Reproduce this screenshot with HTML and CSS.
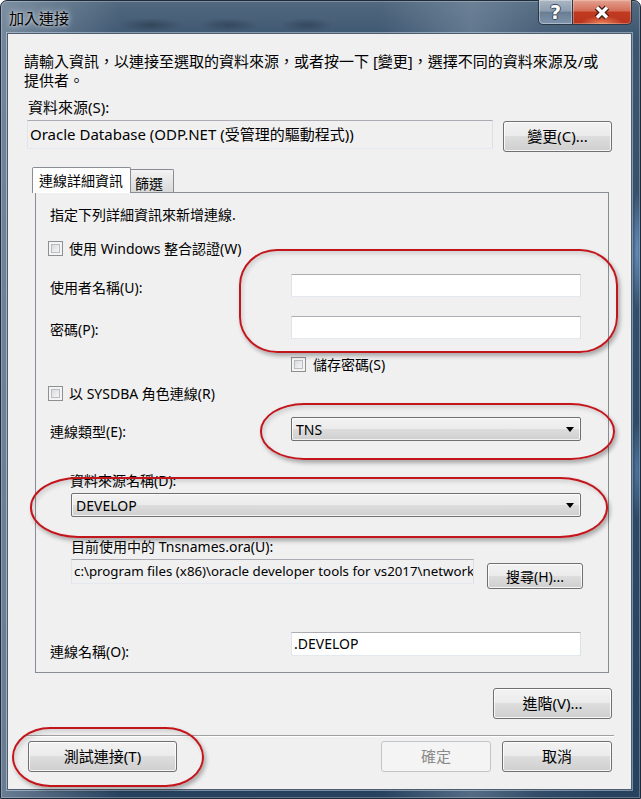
FILE: index.html
```html
<!DOCTYPE html>
<html lang="zh-Hant">
<head>
<meta charset="utf-8">
<title>加入連接</title>
<link rel="stylesheet" href="styles.css">
</head>
<body>
<div class="window">
  <div class="titlebar">
    <span class="title">加入連接</span>
    <div class="caption">
      <span class="cap help">?</span>
      <span class="cap close"><svg width="22" height="15" viewBox="0 0 22 15"><path d="M6 2.5 L16 12.5 M16 2.5 L6 12.5" stroke="#3a1710" stroke-width="6" fill="none"/><path d="M6 2.5 L16 12.5 M16 2.5 L6 12.5" stroke="#fff" stroke-width="3.4" fill="none"/></svg></span>
    </div>
  </div>
  <div class="client">
    <p class="intro">請輸入資訊，以連接至選取的資料來源，或者按一下 [變更]，選擇不同的資料來源及/或<br>提供者。</p>
    <div class="src-label">資料來源(S):</div>
    <div class="src-row">
      <div class="ro src-box">Oracle Database (ODP.NET (受管理的驅動程式))</div>
      <button class="btn change">變更(C)...</button>
    </div>
    <div class="tabs">
      <div class="tab active">連線詳細資訊</div>
      <div class="tab second">篩選</div>
    </div>
    <div class="panel">
      <div class="hint">指定下列詳細資訊來新增連線.</div>
      <div class="cb-row first"><span class="cb"></span><span>使用 Windows 整合認證(W)</span></div>
      <div class="field-row user"><span class="flabel">使用者名稱(U):</span><span class="tb"></span></div>
      <div class="field-row pwd"><span class="flabel">密碼(P):</span><span class="tb"></span></div>
      <div class="cb-row save"><span class="cb"></span><span>儲存密碼(S)</span></div>
      <div class="cb-row sysdba"><span class="cb"></span><span>以 SYSDBA 角色連線(R)</span></div>
      <div class="field-row ctype"><span class="flabel">連線類型(E):</span><span class="combo">TNS<i class="arrow"></i></span></div>
      <div class="dsn-label">資料來源名稱(D):</div>
      <div class="combo dsn">DEVELOP<i class="arrow"></i></div>
      <div class="tns-label">目前使用中的 Tnsnames.ora(U):</div>
      <div class="path-row">
        <div class="ro path">c:\program files (x86)\oracle developer tools for vs2017\network\</div>
        <button class="btn search">搜尋(H)...</button>
      </div>
      <div class="field-row cname"><span class="flabel">連線名稱(O):</span><span class="tb">.DEVELOP</span></div>
    </div>
    <div class="adv-row"><button class="btn adv">進階(V)...</button></div>
    <div class="sep"></div>
    <div class="bottom-row">
      <button class="btn test">測試連接(T)</button>
      <button class="btn ok" disabled>確定</button>
      <button class="btn cancel">取消</button>
    </div>
  </div>
</div>
<div class="mark m1"></div>
<div class="mark m2"></div>
<div class="mark m3"></div>
<div class="mark m4"></div>
</body>
</html>
```

FILE: styles.css
```css
* { box-sizing: border-box; }
html, body { margin: 0; padding: 0; }
body {
  position: relative;
  width: 641px;
  height: 799px;
  overflow: hidden;
  background: #ffffff;
  font-family: "Noto Sans", "Noto Sans CJK TC", sans-serif;
  font-size: 14px;
  color: #000;
}
.window {
  width: 641px;
  height: 799px;
  display: flex;
  flex-direction: column;
  padding: 0 8px 8px 6px;
  border: 1px solid #1d2b3a;
  border-radius: 7px 7px 0 0;
  background:
    radial-gradient(ellipse 32px 7px at 150px 24px, rgba(30, 42, 58, .45), rgba(30, 42, 58, 0)),
    radial-gradient(ellipse 30px 7px at 228px 24px, rgba(30, 42, 58, .4), rgba(30, 42, 58, 0)),
    radial-gradient(ellipse 26px 7px at 306px 24px, rgba(30, 42, 58, .4), rgba(30, 42, 58, 0)),
    radial-gradient(ellipse 5px 60px at 636px 250px, rgba(120, 170, 225, .7), rgba(120, 170, 225, 0)),
    radial-gradient(ellipse 5px 50px at 636px 470px, rgba(110, 160, 215, .5), rgba(110, 160, 215, 0)),
    linear-gradient(90deg, rgba(160, 174, 190, .55) 0, rgba(160, 174, 190, 0) 120px, rgba(0, 0, 0, 0) 380px, rgba(140, 158, 178, .45) 470px, rgba(140, 158, 178, .1) 540px, rgba(0, 0, 0, 0) 600px),
    linear-gradient(180deg, #52697f 0, #3c5570 40px, #304b68 400px, #27425f 799px);
  box-shadow: inset 0 0 0 1px rgba(255, 255, 255, .25);
}
.titlebar {
  height: 32px;
  flex: none;
  display: flex;
  justify-content: space-between;
  align-items: flex-start;
}
.title {
  margin: 8px 0 0 2px;
  font-size: 15px;
  line-height: 19px;
  text-shadow: 0 0 7px rgba(255, 255, 255, .85), 0 0 3px rgba(255, 255, 255, .6);
}
.caption { display: flex; margin-top: -1px; }
.cap {
  display: flex;
  align-items: center;
  justify-content: center;
  height: 25px;
  border: 1px solid #2a3848;
  border-top: none;
}
.help {
  width: 35px;
  border-radius: 0 0 0 5px;
  background: linear-gradient(#aab6c3 0, #8d9db0 45%, #6a7d93 52%, #7f95ad 100%);
  color: #fff;
  font: bold 19px "DejaVu Sans", sans-serif;
  text-shadow: -1px 0 #39475a, 1px 0 #39475a, 0 -1px #39475a, 0 1px #39475a;
  box-shadow: inset 0 0 0 1px rgba(255, 255, 255, .35);
}
.close {
  width: 59px;
  border-left: none;
  border-radius: 0 0 5px 0;
  background:
    radial-gradient(ellipse 22px 8px at 50% 100%, rgba(255, 170, 120, .7), rgba(255, 170, 120, 0)),
    linear-gradient(#e4a292 0, #d46f59 44%, #c13a20 52%, #b9341e 100%);
  box-shadow: inset 0 0 0 1px rgba(255, 220, 200, .35);
}
.client {
  flex: 1;
  background: #f0f0f0;
  border: 1px solid #4c5d71;
  box-shadow: 0 0 0 1px rgba(225, 234, 244, .45);
}
.intro {
  margin: 18px 0 0 16px;
  font-size: 15px;
  line-height: 19px;
  white-space: nowrap;
}
.src-label {
  margin: 8px 0 0 20px;
  font-size: 15px;
  line-height: 19px;
}
.src-row {
  display: flex;
  align-items: flex-start;
  height: 32px;
  margin: 3px 0 0 19px;
}
.ro, .tb {
  border: 1px solid;
  border-color: #abadb3 #dbdfe6 #e3e9ef #e2e3ea;
  overflow: hidden;
  white-space: nowrap;
}
.ro { background: #f0f0f0; }
.tb { background: #fff; }
.src-box {
  width: 466px;
  height: 29px;
  padding-left: 2px;
  font-size: 15px;
  line-height: 27px;
}
.btn {
  font-family: inherit;
  font-size: 15px;
  color: #000;
  border: 1px solid #707070;
  border-radius: 3px;
  background: linear-gradient(#f2f2f2 0, #ebebeb 49%, #dddddd 50%, #cfcfcf 100%);
  box-shadow: inset 0 0 0 1px rgba(255, 255, 255, .8);
  padding: 0;
  line-height: 19px;
  display: flex;
  align-items: center;
  justify-content: center;
}
.btn:disabled {
  border-color: #c2c5c8;
  background: #f4f4f4;
  color: #8a8a8a;
  box-shadow: none;
}
.change { margin: 1px 0 0 10px; width: 109px; height: 31px; }
.tabs {
  display: flex;
  align-items: flex-end;
  height: 25px;
  margin: 15px 0 0 24px;
  position: relative;
  z-index: 1;
}
.tab {
  border: 1px solid #898c95;
  border-bottom: none;
  font-size: 14px;
  line-height: 19px;
  white-space: nowrap;
}
.tab.active {
  width: 99px;
  height: 26px;
  margin-bottom: -1px;
  background: #fff;
  padding: 3px 0 0 6px;
  border-radius: 2px 2px 0 0;
}
.tab.second {
  width: 43px;
  height: 23px;
  border-left: none;
  padding: 4px 0 0 4px;
  background: linear-gradient(#f3f3f3, #e6e6e6 50%, #d9d9d9);
  border-radius: 0 2px 0 0;
}
.panel {
  margin-left: 27px;
  width: 574px;
  border: 1px solid #898c95;
  background: #f0f0f0;
  padding-bottom: 16px;
}
.hint { margin: 12px 0 0 14px; line-height: 19px; }
.cb-row {
  display: flex;
  align-items: center;
  gap: 6px;
  height: 19px;
  line-height: 19px;
}
.cb-row.first { margin: 15px 0 0 12px; }
.cb-row.save { margin: 16px 0 0 255px; gap: 7px; }
.cb-row.sysdba { margin: 10px 0 0 12px; }
.cb {
  flex: none;
  width: 15px;
  height: 15px;
  border: 1px solid #8e8f8f;
  background: linear-gradient(135deg, #cdd0d4 0, #eeeeee 60%, #f8f8f8 100%);
  box-shadow: inset 0 0 0 2px #f4f4f4, inset 0 0 0 3px #b9bcc0;
}
.field-row {
  display: flex;
  align-items: flex-start;
  margin-left: 14px;
  height: 23px;
}
.flabel { width: 241px; flex: none; line-height: 18px; }
.field-row .tb { width: 290px; height: 23px; }
.field-row.user { margin-top: 16px; }
.field-row.pwd { margin-top: 19px; }
.field-row.user .flabel, .field-row.pwd .flabel { margin-top: 5px; }
.field-row.ctype { margin-top: 14px; height: 24px; }
.field-row.ctype .flabel { margin-top: 6px; }
.combo {
  display: flex;
  align-items: center;
  width: 290px;
  height: 24px;
  padding-left: 4px;
  border: 1px solid #707070;
  border-radius: 2px;
  background: linear-gradient(#f2f2f2 0, #ebebeb 49%, #dddddd 50%, #cfcfcf 100%);
  box-shadow: inset 0 0 0 1px rgba(255, 255, 255, .75);
  line-height: 19px;
}
.arrow {
  margin-left: auto;
  margin-right: 6px;
  width: 0;
  height: 0;
  border-left: 4.5px solid transparent;
  border-right: 4.5px solid transparent;
  border-top: 5px solid #000;
}
.dsn-label { margin: 30px 0 0 34px; line-height: 19px; }
.combo.dsn { margin: 3px 0 0 35px; width: 510px; }
.tns-label { margin: 20px 0 0 35px; line-height: 19px; }
.path-row {
  display: flex;
  align-items: flex-start;
  height: 30px;
  margin: 3px 0 0 35px;
}
.path {
  width: 403px;
  height: 25px;
  padding-left: 2px;
  font-size: 13.3px;
  line-height: 23px;
}
.search { margin: 4px 0 0 13px; width: 96px; height: 26px; font-size: 14px; }
.field-row.cname { margin-top: 43px; height: 24px; }
.field-row.cname .flabel { margin-top: 11px; }
.field-row.cname .tb { height: 24px; padding-left: 2px; line-height: 22px; }
.adv-row { margin: 15px 0 0 485px; }
.adv { width: 119px; height: 31px; }
.sep {
  margin: 16px 0 0 19px;
  width: 587px;
  height: 2px;
  border-top: 1px solid #a0a0a0;
  border-bottom: 1px solid #ffffff;
}
.bottom-row { display: flex; margin-top: 4px; height: 31px; }
.test { margin-left: 20px; width: 149px; }
.ok { margin-left: 204px; width: 110px; }
.cancel { margin-left: 11px; width: 110px; }
.mark {
  position: absolute;
  border: 2px solid #c3161c;
  box-shadow: 2px 3px 4px rgba(0, 0, 0, .3), inset 2px 3px 4px rgba(0, 0, 0, .12);
}
.m1 { left: 239px; top: 249px; width: 379px; height: 104px; border-radius: 38px / 36px; }
.m2 { left: 260px; top: 403px; width: 355px; height: 57px; border-radius: 44px / 28px; }
.m3 { left: 30px; top: 477px; width: 578px; height: 61px; border-radius: 48px / 30px; }
.m4 { left: 12px; top: 727px; width: 192px; height: 60px; border-radius: 38px / 30px; }
```
